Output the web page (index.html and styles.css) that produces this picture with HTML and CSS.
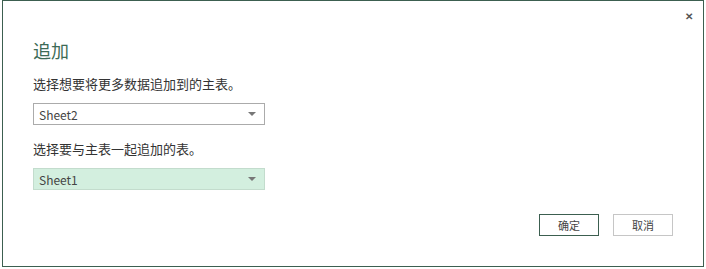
FILE: index.html
```html
<!DOCTYPE html>
<html>
<head>
<meta charset="utf-8">
<link rel="stylesheet" href="styles.css">
</head>
<body>
<div class="dialog">
  <div class="close">&#x2715;</div>
  <h1 class="title">追加</h1>
  <p class="label first">选择想要将更多数据追加到的主表。</p>
  <div class="select"><span>Sheet2</span><i class="arrow"></i></div>
  <p class="label">选择要与主表一起追加的表。</p>
  <div class="select active"><span>Sheet1</span><i class="arrow"></i></div>
  <div class="buttons">
    <button class="btn primary">确定</button>
    <button class="btn">取消</button>
  </div>
</div>
</body>
</html>
```
FILE: styles.css
```css
html, body { margin: 0; padding: 0; background: #fff; }
body {
  width: 706px; height: 269px; overflow: hidden;
  font-family: "Microsoft YaHei", "Noto Sans CJK SC", "Noto Sans", sans-serif;
  color: #333;
}
.dialog {
  position: relative;
  margin-left: 2px;
  width: 702px; height: 267px;
  border: 1px solid #3c5f50;
  background: #fff;
  padding: 0 0 0 30px;
  box-sizing: border-box;
}
.close {
  position: absolute; right: 10px; top: 7px;
  font-size: 10px; font-weight: bold; color: #555;
}
.title {
  margin: 0; padding-top: 37px;
  font-size: 18px; font-weight: normal; line-height: 24px;
  color: #3d6a56;
}
.label {
  margin: 0; font-size: 13px; line-height: 18px; color: #333;
}
.label.first { margin-top: 13px; }
.select {
  margin-top: 10px; margin-bottom: 15px;
  width: 232px; height: 22px; box-sizing: border-box;
  border: 1px solid #ababab;
  display: flex; align-items: center; justify-content: space-between;
  padding: 0 8px 0 5px;
  font-size: 12px; color: #444;
}
.select.active { background: #d3efdf; border-color: #c3dccd; margin-bottom: 0; }
.arrow {
  width: 0; height: 0;
  border-left: 4px solid transparent; border-right: 4px solid transparent;
  border-top: 4px solid #777;
}
.buttons {
  display: flex; justify-content: flex-end; gap: 14px;
  margin-top: 24px; margin-right: 30px;
}
.btn {
  width: 60px; height: 22px; box-sizing: border-box;
  background: #fff; border: 1px solid #c6c6c6;
  font-family: inherit; font-size: 11px; color: #444; padding: 0;
}
.btn.primary { border: 1px solid #3c5f50; }
```
